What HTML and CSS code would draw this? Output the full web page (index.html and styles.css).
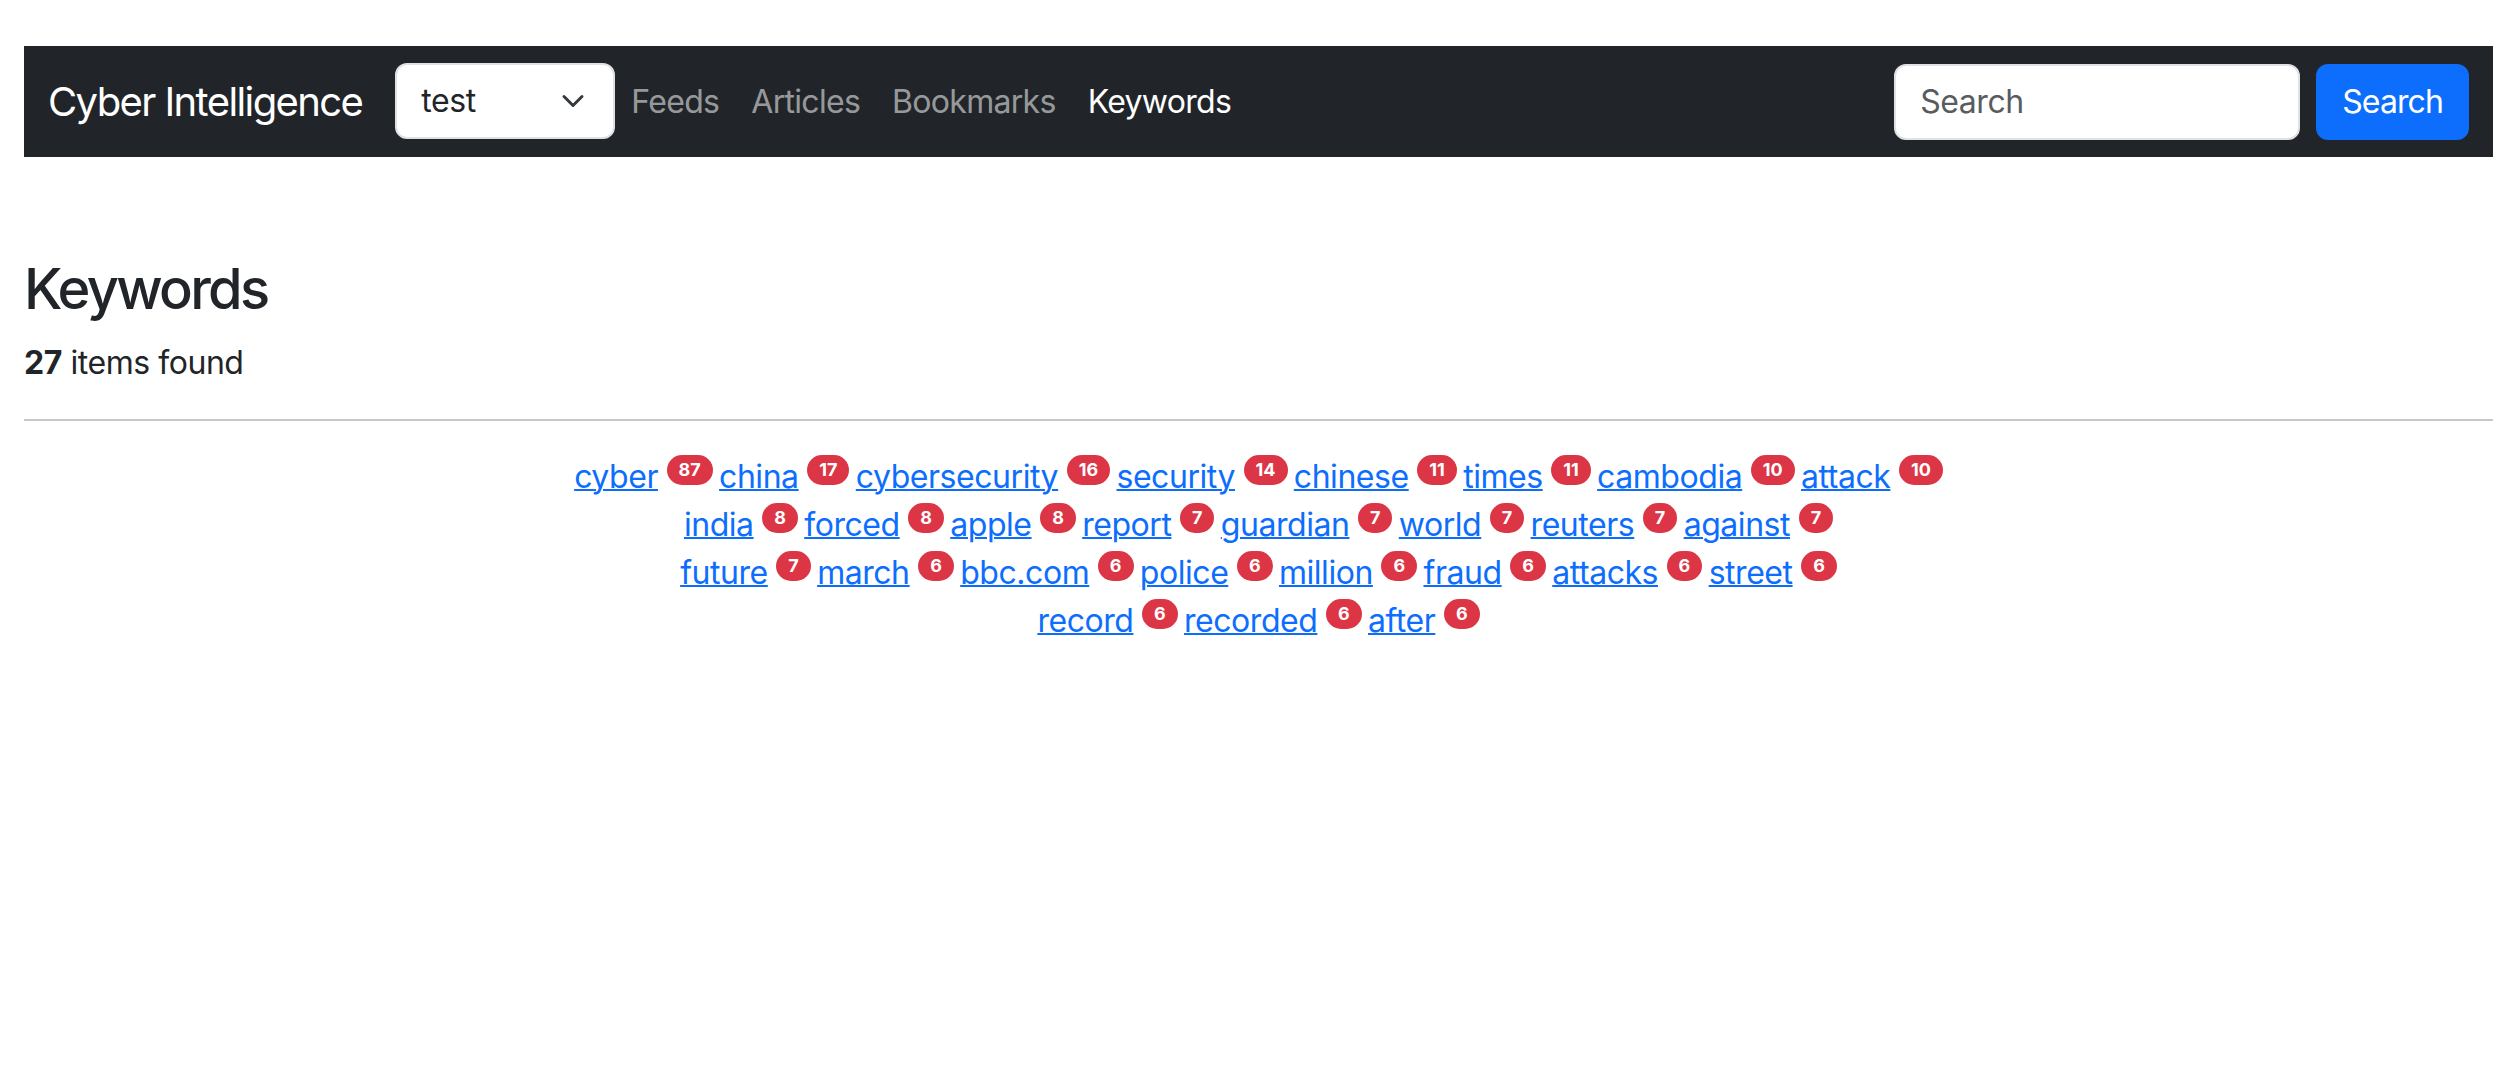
FILE: index.html
```html
<!DOCTYPE html>
<html lang="en">
<head>
<meta charset="utf-8">
<title>Keywords - Cyber Intelligence</title>
<link rel="stylesheet" href="styles.css">
</head>
<body>
<div class="page">
  <nav class="navbar">
    <a class="brand" href="#">Cyber Intelligence</a>
    <div class="select">
      <span class="select-value">test</span>
      <svg class="chevron" width="24" height="24" viewBox="0 0 16 16" aria-hidden="true"><path d="M2 5l6 6 6-6" fill="none" stroke="#343a40" stroke-width="2" stroke-linecap="round" stroke-linejoin="round"/></svg>
    </div>
    <ul class="nav">
      <li><a class="nav-link" href="#">Feeds</a></li>
      <li><a class="nav-link" href="#">Articles</a></li>
      <li><a class="nav-link" href="#">Bookmarks</a></li>
      <li><a class="nav-link active" href="#">Keywords</a></li>
    </ul>
    <form class="search">
      <input class="search-input" type="search" placeholder="Search">
      <button class="btn" type="button">Search</button>
    </form>
  </nav>

  <main class="content">
    <h3 class="title">Keywords</h3>
    <p class="count"><strong>27</strong> items found</p>
    <hr class="divider">
    <div class="cloud">
      <a href="#">cyber</a> <sup><span class="badge">87</span> </sup><a href="#">china</a> <sup><span class="badge">17</span> </sup><a href="#">cybersecurity</a> <sup><span class="badge">16</span> </sup><a href="#">security</a> <sup><span class="badge">14</span> </sup><a href="#">chinese</a> <sup><span class="badge">11</span> </sup><a href="#">times</a> <sup><span class="badge">11</span> </sup><a href="#">cambodia</a> <sup><span class="badge">10</span> </sup><a href="#">attack</a> <sup><span class="badge">10</span></sup><br>
      <a href="#">india</a> <sup><span class="badge">8</span> </sup><a href="#">forced</a> <sup><span class="badge">8</span> </sup><a href="#">apple</a> <sup><span class="badge">8</span> </sup><a href="#">report</a> <sup><span class="badge">7</span> </sup><a href="#">guardian</a> <sup><span class="badge">7</span> </sup><a href="#">world</a> <sup><span class="badge">7</span> </sup><a href="#">reuters</a> <sup><span class="badge">7</span> </sup><a href="#">against</a> <sup><span class="badge">7</span></sup><br>
      <a href="#">future</a> <sup><span class="badge">7</span> </sup><a href="#">march</a> <sup><span class="badge">6</span> </sup><a href="#">bbc.com</a> <sup><span class="badge">6</span> </sup><a href="#">police</a> <sup><span class="badge">6</span> </sup><a href="#">million</a> <sup><span class="badge">6</span> </sup><a href="#">fraud</a> <sup><span class="badge">6</span> </sup><a href="#">attacks</a> <sup><span class="badge">6</span> </sup><a href="#">street</a> <sup><span class="badge">6</span></sup><br>
      <a href="#">record</a> <sup><span class="badge">6</span> </sup><a href="#">recorded</a> <sup><span class="badge">6</span> </sup><a href="#">after</a> <sup><span class="badge">6</span></sup>
    </div>
  </main>
</div>
</body>
</html>
```

FILE: styles.css
```css
* {
  box-sizing: border-box;
}

html, body {
  margin: 0;
  padding: 0;
  background: #ffffff;
}

body {
  font-family: Inter, "Liberation Sans", Arial, sans-serif;
  font-size: 32px;
  line-height: 1.5;
  letter-spacing: -0.45px;
  color: #212529;
}

.page {
  padding: 46px 21px 0 24px;
}

/* Navbar */
.navbar {
  display: flex;
  align-items: center;
  height: 111px;
  padding: 0 24px;
  background: #212529;
}

.brand {
  font-size: 40px;
  line-height: 60px;
  letter-spacing: -1.6px;
  color: #ffffff;
  text-decoration: none;
  margin-right: 33px;
  white-space: nowrap;
}

.select {
  display: flex;
  align-items: center;
  justify-content: space-between;
  width: 220px;
  height: 76px;
  margin-top: -2px;
  padding: 0 24px 0 24px;
  background: #ffffff;
  border: 2px solid #dee2e6;
  border-radius: 12px;
  color: #212529;
  font-size: 32px;
}

.select-value {
  line-height: 48px;
}

.chevron {
  display: block;
  margin-right: 4px;
}

.nav {
  display: flex;
  list-style: none;
  margin: 0;
  padding: 0;
}

.nav-link {
  display: block;
  padding: 16px 16px;
  color: rgba(255, 255, 255, 0.55);
  text-decoration: none;
  line-height: 48px;
  letter-spacing: -0.7px;
}

.nav-link.active {
  color: #ffffff;
}

.search {
  display: flex;
  align-items: center;
  gap: 16px;
  margin: 0 0 0 auto;
}

.search-input {
  width: 406px;
  height: 76px;
  padding: 12px 24px;
  font-family: inherit;
  font-size: 32px;
  letter-spacing: inherit;
  color: #212529;
  background: #ffffff;
  border: 2px solid #dee2e6;
  border-radius: 12px;
  outline: none;
}

.search-input::placeholder {
  color: #595c5f;
  opacity: 1;
}

.btn {
  height: 76px;
  padding: 12px 24px;
  font-family: inherit;
  font-size: 32px;
  letter-spacing: -0.9px;
  line-height: 48px;
  color: #ffffff;
  background: #0d6efd;
  border: 2px solid #0d6efd;
  border-radius: 12px;
}

/* Content */
.content {
  padding-top: 99px;
}

.title {
  margin: 0 0 16px;
  font-size: 56px;
  font-weight: 500;
  line-height: 1.2;
  letter-spacing: -2.7px;
}

.count {
  margin: 0 0 32px;
}

.count strong {
  font-weight: 700;
}

.divider {
  margin: 0 0 32px;
  border: 0;
  border-top: 2px solid #212529;
  opacity: 0.25;
}

.cloud {
  text-align: center;
}

.cloud a {
  color: #0d6efd;
  text-decoration: underline;
  text-decoration-thickness: 2px;
}

.cloud sup {
  position: relative;
  top: -12px;
  font-size: 24px;
  line-height: 0;
  vertical-align: baseline;
}

.badge {
  display: inline-block;
  padding: 6px 12px;
  font-size: 18px;
  font-weight: 700;
  line-height: 1;
  letter-spacing: 0;
  color: #ffffff;
  background: #dc3545;
  border-radius: 100px;
  white-space: nowrap;
  vertical-align: baseline;
}
```
